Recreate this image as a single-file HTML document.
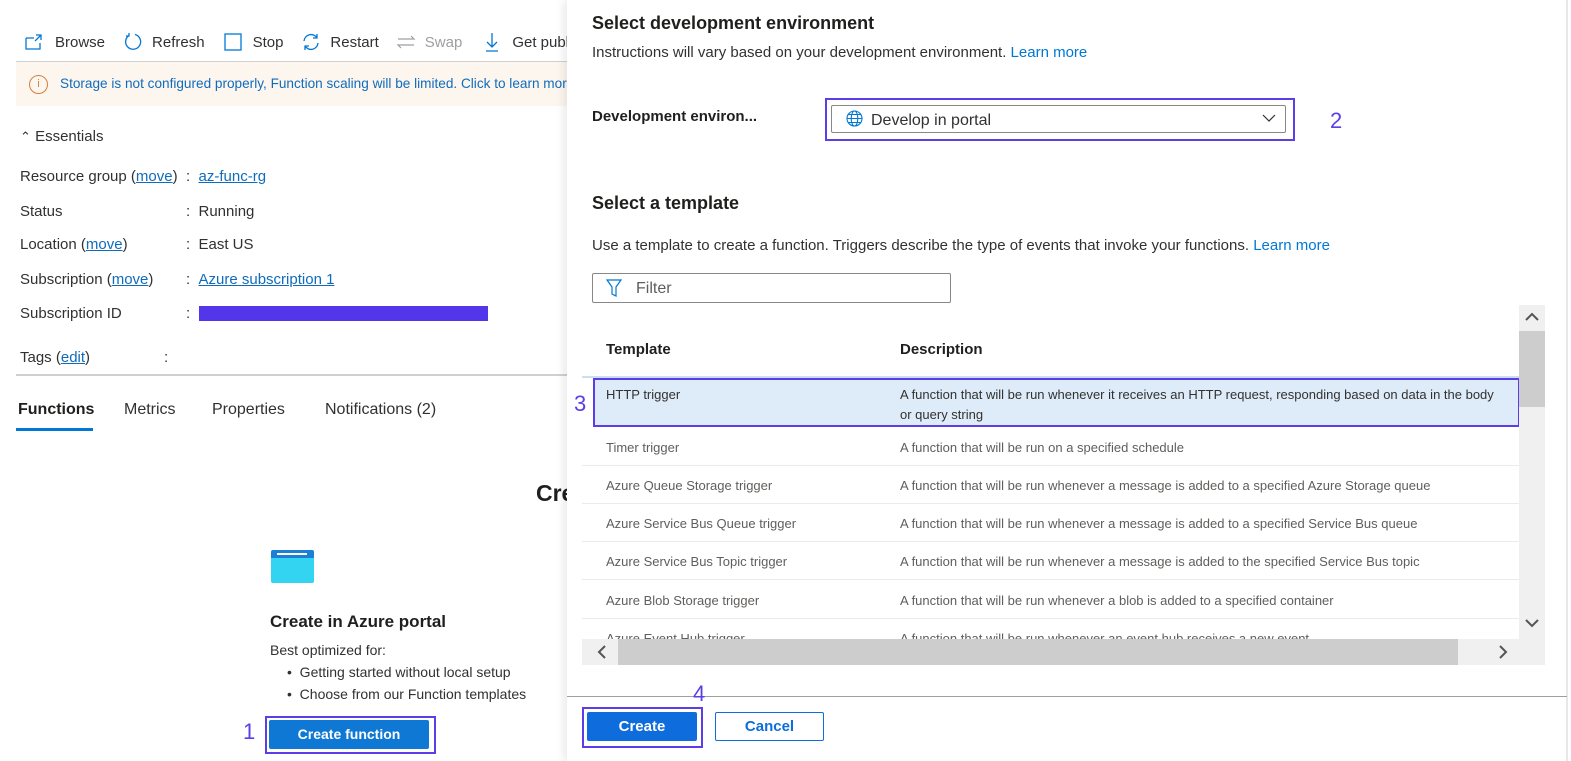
<!DOCTYPE html>
<html><head><meta charset="utf-8"><style>
*{margin:0;padding:0;box-sizing:border-box}
body{width:1571px;height:761px;overflow:hidden;background:#fff;font-family:"Liberation Sans",sans-serif;color:#323130;position:relative}
.a{position:absolute;white-space:nowrap}
a,.lk{color:#0f6cbd;text-decoration:underline}
.t15{font-size:15px}
.blue{color:#0078d4}
.ann{color:#5b3ee8;font-size:22px}
.row{position:absolute;left:582px;width:937px;height:38px;border-bottom:1px solid #edebe9;font-size:13px;color:#605e5c}
.row span{position:absolute;top:12px}
</style></head><body>
<!-- left side -->
<div class="a t15" style="left:24px;top:32px;display:flex;align-items:center">
<svg width="20" height="18" viewBox="0 0 20 18"><path d="M2 5h8M2 5v11h14v-6" fill="none" stroke="#0078d4" stroke-width="1.3"/><path d="M12 2h5v5M17 2l-6 6" fill="none" stroke="#0078d4" stroke-width="1.3"/></svg>
<span style="margin-left:11px">Browse</span>
<svg style="margin-left:18px" width="20" height="20" viewBox="0 0 20 20"><path d="M6 3.5A7.5 7.5 0 1 0 12 2.5" fill="none" stroke="#0078d4" stroke-width="1.3"/><path d="M6 1v3H3" fill="none" stroke="#0078d4" stroke-width="1.3"/></svg>
<span style="margin-left:9px">Refresh</span>
<svg style="margin-left:19px" width="18" height="18"><rect x="1" y="1" width="16" height="16" fill="none" stroke="#0078d4" stroke-width="1.3"/></svg>
<span style="margin-left:11px">Stop</span>
<svg style="margin-left:18px" width="20" height="20" viewBox="0 0 20 20"><path d="M3 9a7 7 0 0 1 13-3M17 11a7 7 0 0 1-13 3" fill="none" stroke="#0078d4" stroke-width="1.3"/><path d="M16 2v4h-4M4 18v-4h4" fill="none" stroke="#0078d4" stroke-width="1.3"/></svg>
<span style="margin-left:9px">Restart</span>
<svg style="margin-left:17px" width="20" height="16" viewBox="0 0 20 16"><path d="M2 5h16l-3-3M18 11H2l3 3" fill="none" stroke="#a19f9d" stroke-width="1.2"/></svg>
<span style="margin-left:9px;color:#a19f9d">Swap</span>
<svg style="margin-left:22px" width="16" height="20" viewBox="0 0 16 20"><path d="M8 1v14M3 10l5 5 5-5M2 19h12" fill="none" stroke="#0078d4" stroke-width="1.3"/></svg>
<span style="margin-left:12px">Get publ</span>
</div>
<div class="a" style="left:16px;top:61px;width:551px;height:1px;background:#d2d0ce"></div>
<div class="a" style="left:16px;top:62px;width:551px;height:44px;background:#fdf6ef"></div>
<div class="a" style="left:29px;top:75px;width:19px;height:19px;border:1.3px solid #d67f3c;border-radius:50%;color:#d67f3c;font-size:11px;text-align:center;line-height:16px">i</div>
<div class="a" style="left:60px;top:76px;width:507px;overflow:hidden;font-size:13.6px;color:#0f6cbd">Storage is not configured properly, Function scaling will be limited. Click to learn more</div>
<div class="a t15" style="left:20px;top:128px"><span style="font-size:13px">⌃</span> Essentials</div>
<div class="a t15" style="left:20px;top:168px">Resource group (<a>move</a>)</div>
<div class="a t15" style="left:186px;top:168px">: &nbsp;<a>az-func-rg</a></div>
<div class="a t15" style="left:20px;top:203px">Status</div>
<div class="a t15" style="left:186px;top:203px">: &nbsp;Running</div>
<div class="a t15" style="left:20px;top:236px">Location (<a>move</a>)</div>
<div class="a t15" style="left:186px;top:236px">: &nbsp;East US</div>
<div class="a t15" style="left:20px;top:271px">Subscription (<a>move</a>)</div>
<div class="a t15" style="left:186px;top:271px">: &nbsp;<a>Azure subscription 1</a></div>
<div class="a t15" style="left:20px;top:305px">Subscription ID</div>
<div class="a t15" style="left:186px;top:305px">:</div>
<div class="a" style="left:199px;top:306px;width:289px;height:15px;background:#5335ea"></div>
<div class="a t15" style="left:20px;top:349px">Tags (<a>edit</a>)</div>
<div class="a t15" style="left:164px;top:349px">:</div>
<div class="a" style="left:16px;top:374px;width:551px;height:2px;background:#d2d0ce"></div>
<div class="a" style="left:18px;top:401px;font-size:16px;font-weight:bold;color:#201f1e">Functions</div>
<div class="a" style="left:16px;top:428px;width:77px;height:3px;background:#0078d4"></div>
<div class="a" style="left:124px;top:401px;font-size:16px">Metrics</div>
<div class="a" style="left:212px;top:401px;font-size:16px">Properties</div>
<div class="a" style="left:325px;top:401px;font-size:16px">Notifications (2)</div>
<div class="a" style="left:536px;top:480px;font-size:23px;font-weight:bold;color:#201f1e">Cre</div>
<div class="a" style="left:271px;top:550px;width:43px;height:33px;background:#32d4f2;border-radius:2px;border-top:8px solid #1c7fd6"></div>
<div class="a" style="left:277px;top:553px;width:30px;height:2px;background:#fff"></div>
<div class="a" style="left:270px;top:612px;font-size:17px;font-weight:bold;color:#201f1e">Create in Azure portal</div>
<div class="a" style="left:270px;top:642px;font-size:14px">Best optimized for:</div>
<div class="a" style="left:287px;top:664px;font-size:14px">•&nbsp; Getting started without local setup</div>
<div class="a" style="left:287px;top:686px;font-size:14px">•&nbsp; Choose from our Function templates</div>
<div class="a ann" style="left:243px;top:719px">1</div>
<div class="a" style="left:265px;top:716px;width:171px;height:38px;border:2px solid #5b3ee8"></div>
<div class="a" style="left:269px;top:720px;width:160px;height:29px;background:#0f78d4;border-radius:2px;color:#fff;font-size:14px;font-weight:bold;text-align:center;line-height:29px">Create function</div>

<!-- panel -->
<div class="a" style="left:567px;top:0;width:1004px;height:761px;background:#fff;box-shadow:-4px 0 8px rgba(0,0,0,0.08)"></div>
<div class="a" style="left:1566px;top:0;width:2px;height:761px;background:#e8e8e8"></div>
<div class="a" style="left:592px;top:13px;font-size:18px;font-weight:bold;color:#201f1e">Select development environment</div>
<div class="a t15" style="left:592px;top:44px">Instructions will vary based on your development environment. <span class="blue">Learn more</span></div>
<div class="a" style="left:592px;top:108px;font-size:15px;font-weight:bold;color:#201f1e">Development environ...</div>
<div class="a" style="left:825px;top:98px;width:470px;height:43px;border:2px solid #5b3ee8"></div>
<div class="a" style="left:831px;top:105px;width:455px;height:28px;border:1px solid #8a8886;border-radius:2px"></div>
<svg class="a" style="left:846px;top:110px" width="17" height="17" viewBox="0 0 17 17"><g fill="none" stroke="#0078d4" stroke-width="1.1"><circle cx="8.5" cy="8.5" r="7.5"/><ellipse cx="8.5" cy="8.5" rx="3.3" ry="7.5"/><path d="M1 8.5h15M2.5 4.5h12M2.5 12.5h12"/></g></svg>
<div class="a t15" style="left:871px;top:112px;font-size:16px">Develop in portal</div>
<svg class="a" style="left:1262px;top:114px" width="14" height="9"><path d="M1 1l6 6 6-6" fill="none" stroke="#323130" stroke-width="1.2"/></svg>
<div class="a ann" style="left:1330px;top:108px">2</div>
<div class="a" style="left:592px;top:193px;font-size:18px;font-weight:bold;color:#201f1e">Select a template</div>
<div class="a t15" style="left:592px;top:237px">Use a template to create a function. Triggers describe the type of events that invoke your functions. <span class="blue">Learn more</span></div>
<div class="a" style="left:592px;top:273px;width:359px;height:30px;border:1px solid #8a8886;border-radius:2px"></div>
<svg class="a" style="left:606px;top:279px" width="16" height="18" viewBox="0 0 16 18"><path d="M1 1h14l-5 7v9l-4-2V8z" fill="none" stroke="#0078d4" stroke-width="1.2"/></svg>
<div class="a" style="left:636px;top:280px;font-size:16px;color:#605e5c">Filter</div>

<div class="a" style="left:606px;top:341px;font-size:15px;font-weight:bold;color:#201f1e">Template</div>
<div class="a" style="left:900px;top:341px;font-size:15px;font-weight:bold;color:#201f1e">Description</div>
<div class="a" style="left:582px;top:376px;width:937px;height:2px;background:#c7e0f4"></div>
<div class="a" style="left:593px;top:378px;width:927px;height:49px;background:#deecf9;border:2px solid #5b3ee8;font-size:13px;color:#323130">
<span class="a" style="left:11px;top:7px">HTTP trigger</span>
<span class="a" style="left:305px;top:7px;width:618px;overflow:hidden">A function that will be run whenever it receives an HTTP request, responding based on data in the body</span>
<span class="a" style="left:305px;top:27px">or query string</span></div>
<div class="a ann" style="left:574px;top:391px">3</div>
<div class="row" style="top:428px"><span style="left:24px">Timer trigger</span><span style="left:318px">A function that will be run on a specified schedule</span></div>
<div class="row" style="top:466px"><span style="left:24px">Azure Queue Storage trigger</span><span style="left:318px">A function that will be run whenever a message is added to a specified Azure Storage queue</span></div>
<div class="row" style="top:504px"><span style="left:24px">Azure Service Bus Queue trigger</span><span style="left:318px">A function that will be run whenever a message is added to a specified Service Bus queue</span></div>
<div class="row" style="top:542px"><span style="left:24px">Azure Service Bus Topic trigger</span><span style="left:318px">A function that will be run whenever a message is added to the specified Service Bus topic</span></div>
<div class="row" style="top:581px"><span style="left:24px">Azure Blob Storage trigger</span><span style="left:318px">A function that will be run whenever a blob is added to a specified container</span></div>
<div class="row" style="top:619px;height:20px;overflow:hidden;border:0"><span style="left:24px">Azure Event Hub trigger</span><span style="left:318px">A function that will be run whenever an event hub receives a new event</span></div>
<!-- scrollbars -->
<div class="a" style="left:1519px;top:305px;width:26px;height:360px;background:#f0f0f0"></div>
<div class="a" style="left:1519px;top:331px;width:26px;height:76px;background:#cdcdcd"></div>
<svg class="a" style="left:1525px;top:312px" width="14" height="9"><path d="M1 8l6-6 6 6" fill="none" stroke="#555" stroke-width="2"/></svg>
<svg class="a" style="left:1525px;top:619px" width="14" height="9"><path d="M1 1l6 6 6-6" fill="none" stroke="#555" stroke-width="2"/></svg>
<div class="a" style="left:582px;top:639px;width:937px;height:26px;background:#f0f0f0"></div>
<div class="a" style="left:618px;top:639px;width:840px;height:26px;background:#cdcdcd"></div>
<svg class="a" style="left:597px;top:645px" width="9" height="14"><path d="M8 1L2 7l6 6" fill="none" stroke="#555" stroke-width="2"/></svg>
<svg class="a" style="left:1499px;top:645px" width="9" height="14"><path d="M1 1l6 6-6 6" fill="none" stroke="#555" stroke-width="2"/></svg>
<!-- footer -->
<div class="a" style="left:567px;top:696px;width:1000px;height:1px;background:#a19f9d"></div>
<div class="a ann" style="left:693px;top:681px">4</div>
<div class="a" style="left:582px;top:707px;width:121px;height:41px;border:2px solid #5b3ee8"></div>
<div class="a" style="left:587px;top:712px;width:110px;height:29px;background:#0f6cdd;border-radius:2px;color:#fff;font-size:15px;font-weight:bold;text-align:center;line-height:30px">Create</div>
<div class="a" style="left:715px;top:712px;width:109px;height:29px;border:1px solid #0f6cdd;border-radius:2px;color:#0f6cdd;font-size:15px;font-weight:bold;text-align:center;line-height:28px">Cancel</div>
</body></html>
